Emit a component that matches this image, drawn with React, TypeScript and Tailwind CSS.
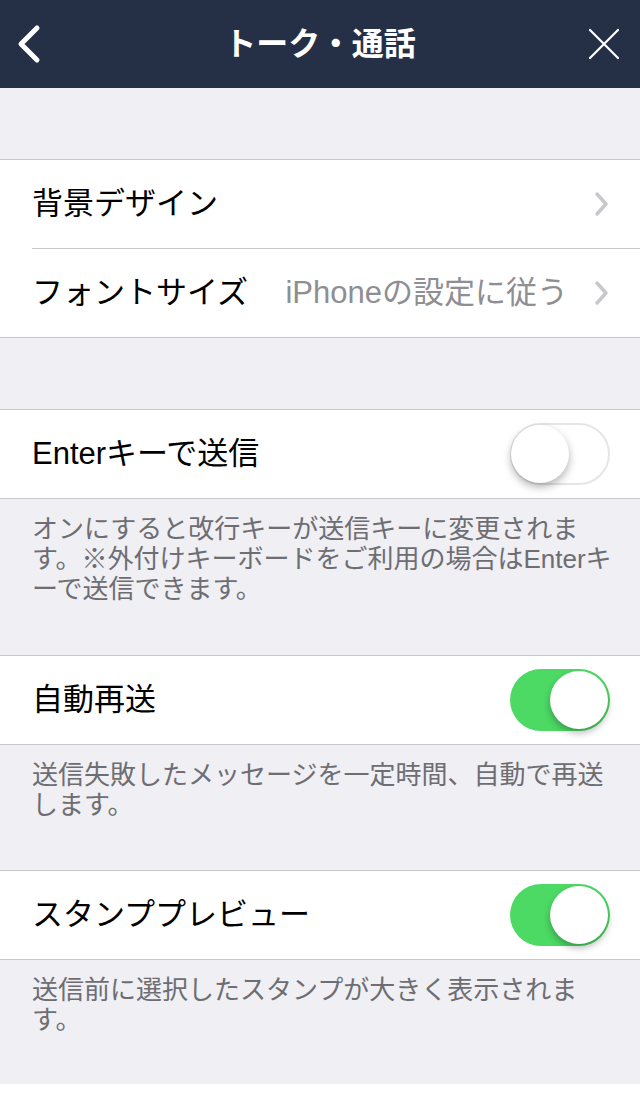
import { ReactNode } from "react";

function Chevron() {
  return (
    <svg width="16" height="26" viewBox="0 0 16 26" className="shrink-0">
      <path d="M3 3 L12 13 L3 23" fill="none" stroke="#c7c7cc" strokeWidth="3.5" strokeLinecap="round" strokeLinejoin="round" />
    </svg>
  );
}

function Toggle({ on }: { on: boolean }) {
  if (on) {
    return (
      <div className="relative w-[100px] h-[62px] rounded-full bg-[#4cd964]">
        <div className="absolute top-[2px] right-[2px] w-[58px] h-[58px] rounded-full bg-white shadow-[0_4px_7px_rgba(0,0,0,0.28)]" />
      </div>
    );
  }
  return (
    <div className="relative w-[100px] h-[62px] rounded-full bg-white border-2 border-[#e6e6e9]">
      <div className="absolute top-0 -left-[1px] w-[58px] h-[58px] rounded-full bg-white shadow-[0_4px_8px_rgba(0,0,0,0.3)]" />
    </div>
  );
}

function Row({ children }: { children: ReactNode }) {
  return <div className="h-[88px] flex items-center pl-8 pr-[30px] text-[31px] text-black">{children}</div>;
}

function Footer({ children, pb = "pb-[50px]" }: { children: ReactNode; pb?: string }) {
  return <div className={`pt-[15px] ${pb} pl-8 pr-[10px] text-[26px] leading-[30px] text-[#6d6d72] whitespace-nowrap`}>{children}</div>;
}

export default function App() {
  return (
    <div className="w-[640px] min-h-[1097px] bg-white font-['Liberation_Sans','Noto_Sans_CJK_JP',sans-serif]">
      {/* NAV BAR */}
      <header className="h-[88px] bg-[#253047] grid grid-cols-[80px_1fr_80px] items-center">
        <div className="pl-[16px] flex items-center">
          <svg width="26" height="40" viewBox="0 0 26 40">
            <path d="M21 4 L5 20 L21 36" fill="none" stroke="white" strokeWidth="5" strokeLinecap="round" strokeLinejoin="round" />
          </svg>
        </div>
        <h1 className="text-center text-white text-[32px] font-bold">トーク・通話</h1>
        <div className="flex justify-end pr-[20px]">
          <svg width="32" height="32" viewBox="0 0 32 32">
            <path d="M2 2 L30 30 M30 2 L2 30" stroke="white" strokeWidth="2.2" strokeLinecap="round" />
          </svg>
        </div>
      </header>

      <div className="bg-[#efeff4]">
        <div className="h-[71px]" />
        <div className="bg-white border-y border-[#c8c7cc]">
          <Row>
            <span className="flex-1">背景デザイン</span>
            <Chevron />
          </Row>
          <div className="ml-8 border-t border-[#c8c7cc]" />
          <Row>
            <span className="flex-1">フォントサイズ</span>
            <span className="text-[#8e8e93] mr-[26px]">iPhoneの設定に従う</span>
            <Chevron />
          </Row>
        </div>

        <div className="h-[71px]" />
        <div className="bg-white border-y border-[#c8c7cc]">
          <Row>
            <span className="flex-1">Enterキーで送信</span>
            <Toggle on={false} />
          </Row>
        </div>
        <Footer pb="pb-[51px]">
          オンにすると改行キーが送信キーに変更されま
          <br />
          す。※外付けキーボードをご利用の場合はEnterキ
          <br />
          ーで送信できます。
        </Footer>

        <div className="bg-white border-y border-[#c8c7cc]">
          <Row>
            <span className="flex-1">自動再送</span>
            <Toggle on />
          </Row>
        </div>
        <Footer>
          送信失敗したメッセージを一定時間、自動で再送
          <br />
          します。
        </Footer>

        <div className="bg-white border-y border-[#c8c7cc]">
          <Row>
            <span className="flex-1">スタンププレビュー</span>
            <Toggle on />
          </Row>
        </div>
        <Footer pb="pb-[49px]">
          送信前に選択したスタンプが大きく表示されま
          <br />
          す。
        </Footer>
      </div>
    </div>
  );
}
